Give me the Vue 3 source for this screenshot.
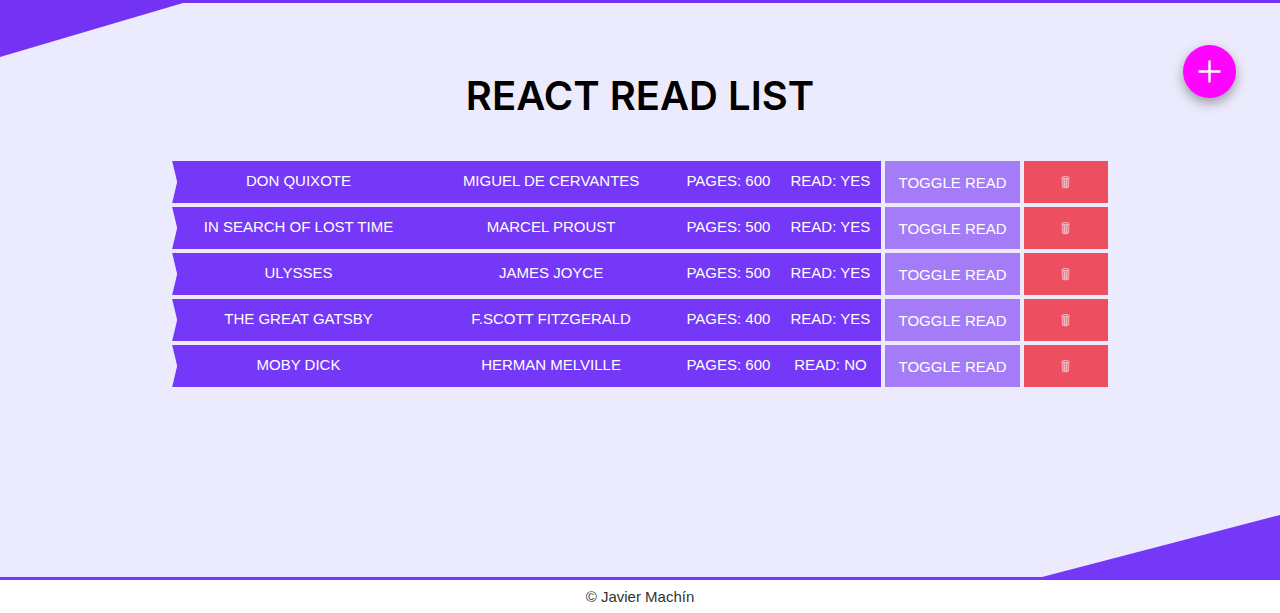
<script setup>
import { ref } from 'vue'

const books = ref([
  { title: 'Don Quixote', author: 'Miguel de Cervantes', pages: 600, read: true },
  { title: 'In Search of Lost Time', author: 'Marcel Proust', pages: 500, read: true },
  { title: 'Ulysses', author: 'James Joyce', pages: 500, read: true },
  { title: 'The Great Gatsby', author: 'F.Scott Fitzgerald', pages: 400, read: true },
  { title: 'Moby Dick', author: 'Herman Melville', pages: 600, read: false }
])

function toggle(book) {
  book.read = !book.read
}

function remove(index) {
  books.value.splice(index, 1)
}
</script>

<template>
  <div class="page">
    <main class="main">
      <h1 class="heading">REACT READ LIST</h1>
      <button class="add" type="button" aria-label="Add book">
        <svg width="24" height="24" viewBox="0 0 24 24" aria-hidden="true">
          <path d="M11.5 0.5v22M0.5 11.5h22" fill="none" stroke="#fff" stroke-width="2.4" />
        </svg>
      </button>
      <table class="books">
        <colgroup>
          <col class="wide" />
          <col class="wide" />
          <col class="narrow" />
          <col class="narrow" />
          <col class="toggle-col" />
          <col class="delete-col" />
        </colgroup>
        <tbody>
          <tr v-for="(book, index) in books" :key="book.title">
            <td class="info first">{{ book.title }}</td>
            <td class="info">{{ book.author }}</td>
            <td class="info">Pages: {{ book.pages }}</td>
            <td class="info">Read: {{ book.read ? 'yes' : 'no' }}</td>
            <td class="action">
              <button class="btn toggle" type="button" @click="toggle(book)">TOGGLE READ</button>
            </td>
            <td class="action">
              <button class="btn delete" type="button" aria-label="Delete book" @click="remove(index)">
                <svg width="10" height="14" viewBox="0 0 10 14" aria-hidden="true">
                  <path d="M1.2 2.6L1.6 12.2Q4.5 13.8 7.4 12.2L7.8 2.6Z" fill="#fff" fill-opacity=".3" />
                  <ellipse cx="4.5" cy="2.6" rx="3.6" ry="1.2" fill="none" stroke="#f9cdd6" stroke-width=".8" />
                  <path d="M1 2.8L1.5 12.2Q4.5 13.8 7.5 12.2L8 2.8M3.4 4.4L3.6 12.6M5.6 4.4L5.4 12.6" fill="none" stroke="#f9cdd6" stroke-width=".7" />
                </svg>
              </button>
            </td>
          </tr>
        </tbody>
      </table>
    </main>
    <footer class="footer">© Javier Machín</footer>
  </div>
</template>

<style>
body {
  margin: 0;
}
</style>

<style scoped>
.page {
  display: flex;
  flex-direction: column;
  min-height: 100vh;
  font-family: "Liberation Sans", Arial, sans-serif;
  font-size: 15px;
}

.main {
  position: relative;
  flex: 1;
  box-sizing: border-box;
  padding: 69px 0 72px;
  border-top: 3px solid #7433f4;
  border-bottom: 3px solid #7638f8;
  background: #ecebfd;
}

.main::before,
.main::after {
  content: "";
  position: absolute;
}

.main::before {
  top: 0;
  left: 0;
  width: 183px;
  height: 54px;
  background: #7433f4;
  clip-path: polygon(0 0, 100% 0, 0 100%);
}

.main::after {
  right: 0;
  bottom: 0;
  width: 238px;
  height: 62px;
  background: #7638f8;
  clip-path: polygon(100% 0, 100% 100%, 0 100%);
}

.heading {
  margin: 0 0 37px;
  color: #000;
  font-family: Inter, Roboto, sans-serif;
  font-size: 40px;
  font-weight: 600;
  line-height: 48px;
  text-align: center;
}

.add {
  position: absolute;
  top: 42px;
  right: 44px;
  display: grid;
  place-items: center;
  width: 53px;
  height: 53px;
  padding: 0;
  border: 0;
  border-radius: 50%;
  background: #ff05ff;
  box-shadow: 0 5px 12px rgba(0, 0, 0, 0.35);
  cursor: pointer;
}

.books {
  width: 73.1%;
  margin: 0 auto;
  border-spacing: 0 4px;
  table-layout: fixed;
}

.wide {
  width: 27%;
}

.narrow {
  width: 10.9%;
}

.toggle-col {
  width: 14.8%;
}

.delete-col {
  width: 9.4%;
}

.info {
  height: 42px;
  box-sizing: border-box;
  padding: 0 0 4px;
  background: #7638f8;
  color: #fff;
  text-align: center;
  text-transform: uppercase;
  white-space: nowrap;
}

.first {
  position: relative;
}

/* notch cut into the row's left edge */
.first::before {
  content: "";
  position: absolute;
  top: 0;
  bottom: 0;
  left: -1px;
  width: 6px;
  background: #ecebfd;
  clip-path: polygon(0 0, 1px 0, 100% 50%, 1px 100%, 0 100%);
}

.action {
  padding: 0 0 0 4px;
}

.btn {
  display: grid;
  place-items: center;
  width: 100%;
  height: 42px;
  padding: 0;
  border: 0;
  color: #fff;
  font: inherit;
  white-space: nowrap;
  cursor: pointer;
}

.toggle {
  background: #a47cf8;
}

.delete {
  background: #ed4e60;
}

.footer {
  padding: 8px 0;
  background: #fff;
  color: #333;
  line-height: 17px;
  text-align: center;
}
</style>
